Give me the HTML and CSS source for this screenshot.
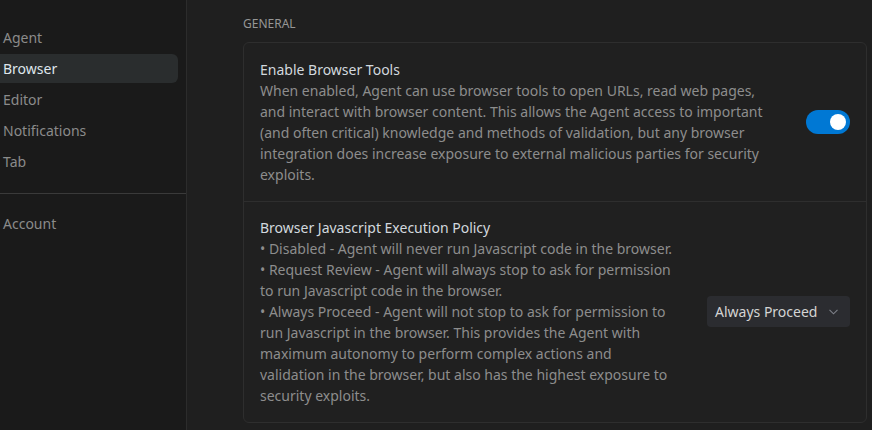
FILE: index.html
```html
<!DOCTYPE html>
<html>
<head>
<meta charset="utf-8">
<link rel="stylesheet" href="styles.css">
</head>
<body>
<div class="app">
  <aside class="sidebar">
    <nav class="nav">
      <div class="nav-item">Agent</div>
      <div class="nav-item active">Browser</div>
      <div class="nav-item">Editor</div>
      <div class="nav-item">Notifications</div>
      <div class="nav-item">Tab</div>
    </nav>
    <div class="divider"></div>
    <nav class="nav">
      <div class="nav-item">Account</div>
    </nav>
  </aside>
  <main class="main">
    <div class="section-label">GENERAL</div>
    <div class="card">
      <div class="row">
        <div class="row-text">
          <div class="row-title">Enable Browser Tools</div>
          <div class="row-desc">When enabled, Agent can use browser tools to open URLs, read web pages, and interact with browser content. This allows the Agent access to important (and often critical) knowledge and methods of validation, but any browser integration does increase exposure to external malicious parties for security exploits.</div>
        </div>
        <div class="toggle on"><span class="knob"></span></div>
      </div>
      <div class="row">
        <div class="row-text">
          <div class="row-title">Browser Javascript Execution Policy</div>
          <div class="row-desc">
            <div>• Disabled - Agent will never run Javascript code in the browser.</div>
            <div>• Request Review - Agent will always stop to ask for permission to run Javascript code in the browser.</div>
            <div>• Always Proceed - Agent will not stop to ask for permission to run Javascript in the browser. This provides the Agent with maximum autonomy to perform complex actions and validation in the browser, but also has the highest exposure to security exploits.</div>
          </div>
        </div>
        <div class="select">
          <span>Always Proceed</span>
          <svg class="chev" width="11" height="11" viewBox="0 0 11 11"><path d="M1.5 3.8 L5.5 7.8 L9.5 3.8" fill="none" stroke="currentColor" stroke-width="1.1"/></svg>
        </div>
      </div>
    </div>
  </main>
</div>
</body>
</html>
```
FILE: styles.css
```css
* { box-sizing: border-box; }
html, body {
  margin: 0;
  height: 100%;
  background: #1f1f1f;
  font-family: "Noto Sans", "Open Sans", sans-serif;
  font-size: 14px;
  overflow: hidden;
}
.app {
  display: flex;
  height: 430px;
}
.sidebar {
  width: 187px;
  flex: none;
  background: #1a1a1a;
  border-right: 1px solid #2c2c2c;
  padding-top: 23px;
}
.nav {
  display: flex;
  flex-direction: column;
  gap: 2px;
  padding-right: 8px;
}
.nav-item {
  height: 29px;
  line-height: 29px;
  padding-left: 3px;
  color: #8b8b8b;
  border-radius: 0 6px 6px 0;
}
.nav-item.active {
  background: #2a2d2e;
  color: #dfe6ec;
}
.divider {
  height: 1px;
  background: #3a3a3a;
  margin: 17px 0 15px;
}
.main {
  flex: 1;
  padding: 14px 5px 0 56px;
}
.section-label {
  font-size: 12px;
  color: #969696;
  line-height: 20px;
  margin-bottom: 8px;
}
.card {
  border: 1px solid #2e2e2e;
  border-radius: 6px;
  background: #202020;
}
.row {
  display: flex;
  align-items: center;
  gap: 30px;
  padding: 16px 16px 16px 16px;
}
.row + .row {
  border-top: 1px solid #2e2e2e;
  padding-top: 15px;
}
.row-text {
  flex: 1;
  min-width: 0;
}
.row-title {
  color: #d2d8de;
  line-height: 21px;
}
.row-desc {
  color: #8d8d8d;
  line-height: 21px;
}
.toggle {
  flex: none;
  width: 44px;
  height: 24px;
  border-radius: 12px;
  background: #0078d4;
  display: flex;
  align-items: center;
  justify-content: flex-end;
  padding-right: 4px;
}
.knob {
  width: 16px;
  height: 16px;
  border-radius: 50%;
  background: #ffffff;
}
.select {
  flex: none;
  width: 143px;
  height: 31px;
  border-radius: 4px;
  background: #2b2c30;
  color: #d4d4d4;
  display: flex;
  align-items: center;
  padding-left: 8px;
  gap: 11px;
}
.chev {
  color: #7d8088;
}
```
